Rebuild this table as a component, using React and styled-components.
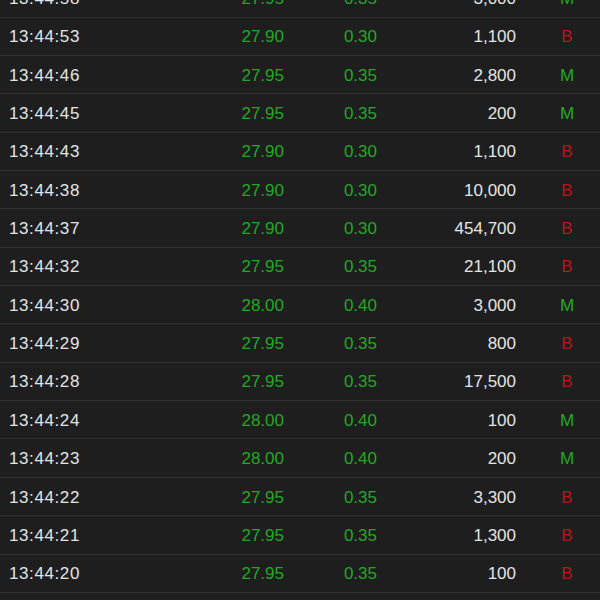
import React from "react";
import styled, { createGlobalStyle } from "styled-components";

const GlobalStyle = createGlobalStyle`
  html, body {
    margin: 0;
    padding: 0;
    background: #1e1e1f;
    overflow: hidden;
  }
`;

const TradeList = styled.div`
  width: 600px;
  height: 600px;
  overflow: hidden;
  background: #1e1e1f;
  font-family: "Liberation Sans", Arial, sans-serif;
  font-size: 17px;
`;

const Rows = styled.div`
  margin-top: -20.65px;
`;

const Row = styled.div`
  display: grid;
  grid-template-columns: 180px 95px 93px 139px 1fr;
  align-items: center;
  box-sizing: border-box;
  height: 38.35px;
  padding: 2px 0 0 9px;
  border-bottom: 1.5px solid #2f2f31;
  color: #e4e4e4;
`;

const Time = styled.span`
  letter-spacing: 0.6px;
`;

const Num = styled.span`
  text-align: right;
  color: ${(p) => (p.$green ? "#22a824" : "#e4e4e4")};
`;

const Side = styled.span`
  text-align: center;
  padding-left: 18px;
  color: ${(p) => (p.$side === "M" ? "#22a824" : "#b5161c")};
`;

const trades = [
  ["13:44:58", "27.95", "0.35", "3,000", "M"],
  ["13:44:53", "27.90", "0.30", "1,100", "B"],
  ["13:44:46", "27.95", "0.35", "2,800", "M"],
  ["13:44:45", "27.95", "0.35", "200", "M"],
  ["13:44:43", "27.90", "0.30", "1,100", "B"],
  ["13:44:38", "27.90", "0.30", "10,000", "B"],
  ["13:44:37", "27.90", "0.30", "454,700", "B"],
  ["13:44:32", "27.95", "0.35", "21,100", "B"],
  ["13:44:30", "28.00", "0.40", "3,000", "M"],
  ["13:44:29", "27.95", "0.35", "800", "B"],
  ["13:44:28", "27.95", "0.35", "17,500", "B"],
  ["13:44:24", "28.00", "0.40", "100", "M"],
  ["13:44:23", "28.00", "0.40", "200", "M"],
  ["13:44:22", "27.95", "0.35", "3,300", "B"],
  ["13:44:21", "27.95", "0.35", "1,300", "B"],
  ["13:44:20", "27.95", "0.35", "100", "B"],
  ["13:44:19", "27.95", "0.35", "500", "B"],
];

export default function App() {
  return (
    <>
      <GlobalStyle />
      <TradeList>
        <Rows>
          {trades.map(([time, price, change, vol, side], i) => (
            <Row key={i}>
              <Time>{time}</Time>
              <Num $green>{price}</Num>
              <Num $green>{change}</Num>
              <Num>{vol}</Num>
              <Side $side={side}>{side}</Side>
            </Row>
          ))}
        </Rows>
      </TradeList>
    </>
  );
}
